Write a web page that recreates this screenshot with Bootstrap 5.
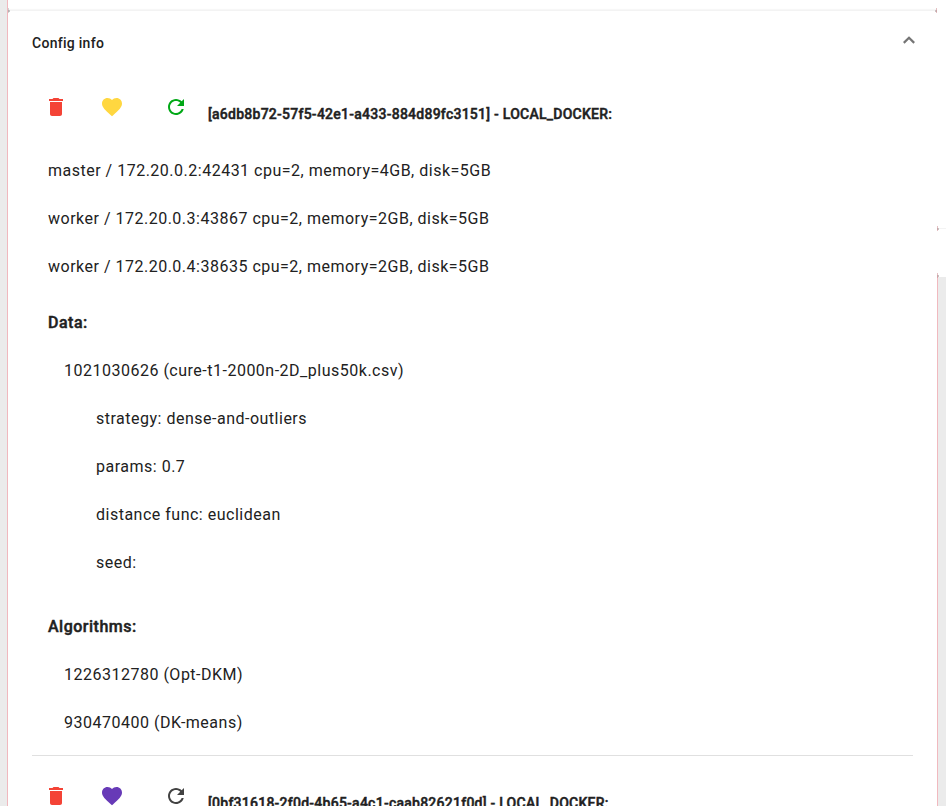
<!DOCTYPE html>
<html lang="en">
<head>
<meta charset="utf-8">
<meta name="viewport" content="width=device-width, initial-scale=1">
<title>Config info</title>
<link href="https://cdn.jsdelivr.net/npm/bootstrap@5.3.0/dist/css/bootstrap.min.css" rel="stylesheet">
<style>
body{font-family:Roboto,"Liberation Sans",sans-serif;color:#212121;background:#fff}
.shell{height:806px}
.gutter{width:8px;background:#ebebeb;border-right:1px solid #f1b9bf}
.side{width:9px}
.side-top{height:229px;border-bottom:1px solid #f3f3f3;background:#fff}
.side-mid{height:48px;background:#fff}
.side-low{background:#ebebeb;border-left:1px solid #f1b9bf}
/* rounded-corner remnants where panels meet */
.notch{position:absolute;width:2px;height:2px;background:#c9c3c3}
.notch::before{content:"";position:absolute;left:0;top:-2px;width:1px;height:5px;background:rgba(205,140,145,.55)}
.notch-a{left:8px;top:10px}
.notch-a::before{background:rgba(150,150,150,.4)}
.notch-b{right:9px;top:10px}
.notch-b::before{left:1px}
.notch-c{right:7px;top:228px}
.notch-d{right:7px;top:275px}
.panel-prev{height:10px}
.panel-main{border-top:1px solid #f3f3f3;box-shadow:0 -1px 1px rgba(0,0,0,.03)}
.panel-head{height:64px;padding-left:24px;padding-right:16px}
.panel-title{font-size:14px;font-weight:500;line-height:20px;letter-spacing:.28px}
.entries{padding:0 24px}
.entry-head{height:72px;padding:20px 12px 0}
.entry-head svg{display:block;flex:none}
.heart{margin-left:32px}
.refresh{margin-left:40px}
.entry-title{font-size:14px;font-weight:500;line-height:20px;letter-spacing:.25px;-webkit-text-stroke:.45px #212121;margin:9px 0 0 20px;white-space:nowrap}
.line{height:48px;line-height:48px;font-size:16px;letter-spacing:.5px;padding-left:16px;white-space:nowrap}
.heading{font-weight:500;-webkit-text-stroke:.45px #212121}
.in1{padding-left:32px}
.in2{padding-left:64px}
.rule{height:1px;background:#e0e0e0;margin:8px 0}
</style>
<script src="https://cdn.jsdelivr.net/npm/bootstrap@5.3.0/dist/js/bootstrap.bundle.min.js"></script>
</head>
<body class="overflow-hidden">
<svg class="d-none">
<symbol id="trash" viewBox="0 0 24 24"><path d="M6 19c0 1.100.9 2 2 2h8c1.100 0 2-.9 2-2V7H6v12zM19 4h-3.500l-1-1h-5l-1 1H5v2h14V4z"/></symbol>
<symbol id="heart" viewBox="0 0 24 24"><path d="M12 21.350l-1.450-1.320C5.400 15.360 2 12.280 2 8.500 2 5.420 4.420 3 7.500 3c1.740 0 3.410.81 4.500 2.090C13.090 3.810 14.760 3 16.500 3 19.580 3 22 5.420 22 8.500c0 3.780-3.400 6.860-8.550 11.540L12 21.350z"/></symbol>
<symbol id="refresh" viewBox="0 0 24 24"><path d="M17.650 6.350C16.200 4.900 14.210 4 12 4c-4.420 0-7.990 3.580-7.990 8s3.570 8 7.990 8c3.730 0 6.840-2.550 7.730-6h-2.080c-.82 2.330-3.040 4-5.650 4-3.310 0-6-2.690-6-6s2.690-6 6-6c1.660 0 3.140.69 4.220 1.780L13 11h7V4l-2.350 2.350z"/></symbol>
</svg>
<div class="shell d-flex overflow-hidden position-relative">
  <div class="gutter flex-shrink-0"></div>
  <main class="flex-grow-1">
    <div class="panel-prev"></div>
    <section class="panel-main">
      <header class="panel-head d-flex align-items-center justify-content-between">
        <span class="panel-title">Config info</span>
        <svg width="24" height="24" viewBox="0 0 24 24" class="mb-1" fill="none" stroke="#757575" stroke-width="2.200"><path d="M6.800 13.900L12 8.700l5.200 5.200"/></svg>
      </header>
      <div class="entries">
        <div class="entry-head d-flex align-items-start">
          <svg width="24" height="24" fill="#f44336"><use href="#trash"/></svg>
          <svg class="heart" width="24" height="24" fill="#ffd740"><use href="#heart"/></svg>
          <svg class="refresh" width="24" height="24" fill="#00a816"><use href="#refresh"/></svg>
          <span class="entry-title">[a6db8b72-57f5-42e1-a433-884d89fc3151] - LOCAL_DOCKER:</span>
        </div>
        <div class="line">master / 172.20.0.2:42431 cpu=2, memory=4GB, disk=5GB</div>
        <div class="line">worker / 172.20.0.3:43867 cpu=2, memory=2GB, disk=5GB</div>
        <div class="line">worker / 172.20.0.4:38635 cpu=2, memory=2GB, disk=5GB</div>
        <div class="line heading mt-2">Data:</div>
        <div class="line in1">1021030626 (cure-t1-2000n-2D_plus50k.csv)</div>
        <div class="line in2">strategy: dense-and-outliers</div>
        <div class="line in2">params: 0.7</div>
        <div class="line in2">distance func: euclidean</div>
        <div class="line in2">seed:</div>
        <div class="line heading mt-3">Algorithms:</div>
        <div class="line in1">1226312780 (Opt-DKM)</div>
        <div class="line in1">930470400 (DK-means)</div>
        <div class="rule"></div>
        <div class="entry-head d-flex align-items-start">
          <svg width="24" height="24" fill="#f44336"><use href="#trash"/></svg>
          <svg class="heart" width="24" height="24" fill="#673ab7"><use href="#heart"/></svg>
          <svg class="refresh" width="24" height="24" fill="#424242"><use href="#refresh"/></svg>
          <span class="entry-title">[0bf31618-2f0d-4b65-a4c1-caab82621f0d] - LOCAL_DOCKER:</span>
        </div>
      </div>
    </section>
  </main>
  <div class="side d-flex flex-column flex-shrink-0">
    <div class="side-top"></div>
    <div class="side-mid"></div>
    <div class="side-low flex-grow-1"></div>
  </div>
  <i class="notch notch-a"></i><i class="notch notch-b"></i><i class="notch notch-c"></i><i class="notch notch-d"></i>
</div>
</body>
</html>
